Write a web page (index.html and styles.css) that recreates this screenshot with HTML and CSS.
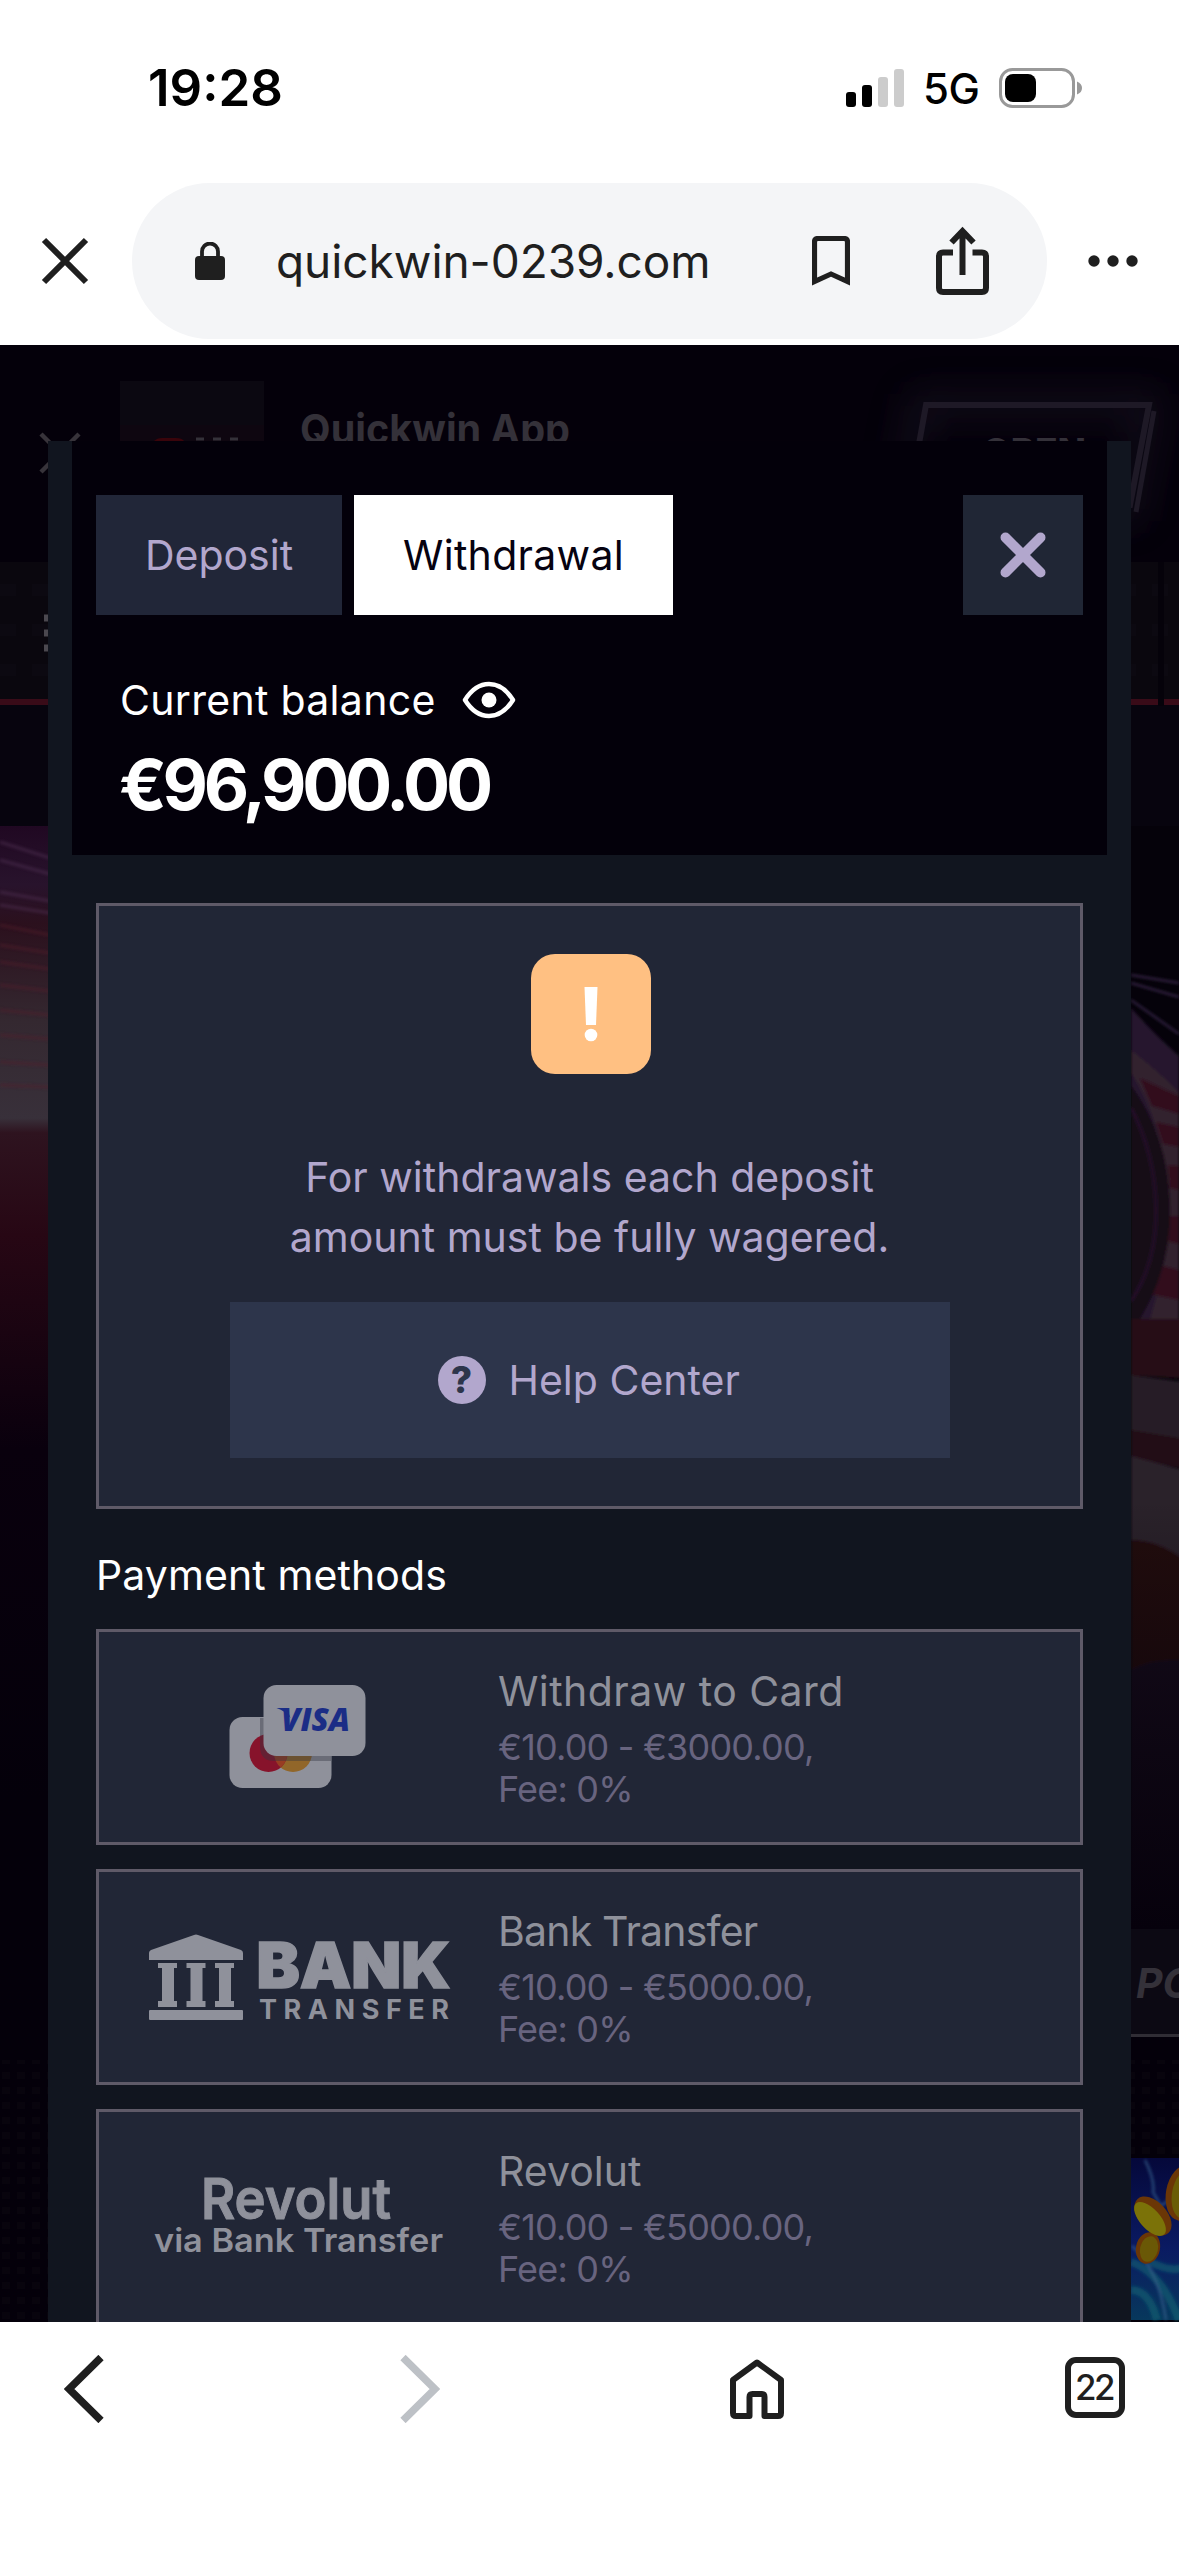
FILE: index.html
```html
<!DOCTYPE html>
<html lang="en">
<head>
<meta charset="utf-8">
<title>Quickwin – Withdrawal</title>
<link rel="stylesheet" href="styles.css">
</head>
<body>
<header class="browser-top">
  <div class="status">
    <span class="time">19:28</span>
    <div class="status-right">
      <svg class="signal" width="58" height="38" viewBox="0 0 58 38"><rect y="23" width="10" height="15" rx="3"/><rect x="16" y="16" width="10" height="22" rx="3"/><rect x="32" y="8" width="10" height="30" rx="3" fill="#ccc"/><rect x="48" width="10" height="38" rx="3" fill="#ccc"/></svg>
      <span class="network">5G</span>
      <svg class="battery" width="83" height="40" viewBox="0 0 83 40"><rect x="1.5" y="1.5" width="73" height="37" rx="12" fill="none" stroke="#999" stroke-width="3"/><rect x="6" y="6" width="31" height="28" rx="8"/><path d="M78 13.5q5 2 5 6.500t-5 6.500z" fill="#999"/></svg>
    </div>
  </div>
  <div class="toolbar">
    <svg class="tb-close" width="48" height="48" viewBox="0 0 48 48"><path d="M3 3l42 42M45 3L3 45" stroke="#1f1f1f" stroke-width="6" fill="none"/></svg>
    <div class="address">
      <svg class="lock" width="30" height="38" viewBox="0 0 30 38"><path d="M7 17V9.500a8 8 0 0 1 16 0V17" fill="none" stroke="#1f1f1f" stroke-width="3.800"/><rect y="14" width="30" height="24" rx="4" fill="#1f1f1f"/></svg>
      <span class="url">quickwin-0239.com</span>
      <svg class="bookmark" width="38" height="50" viewBox="0 0 38 50"><path d="M2.500 45.500V6q0-3.500 3.500-3.500h26q3.500 0 3.500 3.500v39.500L19 38z" fill="none" stroke="#1f1f1f" stroke-width="5.200"/></svg>
      <svg class="share" width="54" height="70" viewBox="0 0 54 70"><g fill="none" stroke="#1f1f1f" stroke-width="6"><path d="M17 26.500H7q-4 0-4 4V62q0 4 4 4h39q4 0 4-4V30.500q0-4-4-4H36.500"/><path d="M26.500 49V5M15.500 16.500L26.500 5l11 11.500"/></g></svg>
    </div>
    <svg class="more" width="50" height="12" viewBox="0 0 50 12"><circle cx="6" cy="6" r="5.700"/><circle cx="25" cy="6" r="5.700"/><circle cx="44" cy="6" r="5.700"/></svg>
  </div>
</header>

<main class="page">
  <svg class="backdrop" width="1179" height="1980" viewBox="0 345 1179 1980">
    <defs>
      <linearGradient id="left" x1="0" y1="0" x2="0" y2="1"><stop offset="0" stop-color="#200822"/><stop offset=".06" stop-color="#28132c"/><stop offset=".1" stop-color="#2b101d"/><stop offset=".2" stop-color="#342830"/><stop offset=".3" stop-color="#38303a"/><stop offset=".315" stop-color="#2e131f"/><stop offset=".42" stop-color="#270714"/><stop offset=".52" stop-color="#1a0411"/><stop offset=".64" stop-color="#09000d"/><stop offset="1" stop-color="#04000a"/></linearGradient>
      <linearGradient id="fade" x1="0" y1="0" x2="0" y2="1"><stop offset="0" stop-color="#07010a" stop-opacity="0"/><stop offset="1" stop-color="#06010c"/></linearGradient>
      <linearGradient id="sky" x1="0" y1="0" x2="0" y2="1"><stop offset="0" stop-color="#05083a"/><stop offset=".55" stop-color="#0a1a62"/><stop offset="1" stop-color="#07385c"/></linearGradient>
      <pattern id="dots" width="15" height="15" patternUnits="userSpaceOnUse"><rect x="2" y="2" width="8" height="7" fill="#08040d"/></pattern>
      <filter id="glow" x="-30%" y="-60%" width="160%" height="220%"><feGaussianBlur stdDeviation="18"/></filter>
      <filter id="soft"><feGaussianBlur stdDeviation="1.500"/></filter>
    </defs>
    <rect y="345" width="1179" height="1980" fill="#04000a"/>
    <rect x="120" y="381" width="144" height="80" fill="#0b0811"/>
    <rect x="120" y="425" width="144" height="36" fill="#0e0610"/>
    <path d="M154 441q3-3 8-3h14q6 0 8 3z" fill="#3a040b"/>
    <path d="M196 439h8M213 439h8M230 439h8" stroke="#343139" stroke-width="3"/>
    <path d="M41 434l37 37M79 434L41 472" stroke="#37333a" stroke-width="4.500"/>
    <path d="M920 405h230l-20 105H900z" fill="none" stroke="#262030" stroke-width="22" filter="url(#glow)" opacity=".45"/>
    <path d="M917 455l9-50h223l-19 100h-24" fill="none" stroke="#1e1926" stroke-width="6"/>
    <path d="M1154 411l-18 101" stroke="#1e1926" stroke-width="5"/>
    <rect y="562" width="1179" height="144" fill="#0a070e"/>
    <g stroke="#0c0911" stroke-width="12" stroke-dasharray="16 16"><path d="M0 590H1179M0 630H1179M0 670H1179"/></g>
    <rect y="699" width="1179" height="6" fill="#390b18"/>
    <rect y="705" width="1179" height="121" fill="#07040e"/>
    <rect x="1158" y="562" width="6" height="144" fill="#05020a"/>
    <path d="M44 618h10M44 633h10M44 648h10" stroke="#4b484f" stroke-width="7"/>
    <rect y="826" width="60" height="974" fill="url(#left)"/>
    <g stroke-width="3" opacity=".5" fill="none" filter="url(#soft)"><path d="M0 842l50 16M0 860l50 14M0 892l50 9M0 905l50 8" stroke="#513154"/><path d="M0 925l50 10M0 945l50 8M0 962l50 7M0 985l50 6M0 1010l50 5M0 1035l50 4M0 1062l50 3M0 1085l50 2" stroke="#521d2c"/></g>
    <rect x="1120" y="826" width="59" height="1104" fill="#05020a"/>
    <g filter="url(#soft)">
      <path d="M1131 975l48 8M1131 983l48 14M1131 1000l48 34" stroke="#362547" stroke-width="2" fill="none"/>
      <path d="M1131 1008q25 28 48 48v270l-48-6z" fill="#28152f"/>
      <path d="M1131 1050q30 24 48 42v236h-32q30-90 18-160-10-60-34-95z" fill="#30202e"/>
      <path d="M1140 1078l39 18v18l-27-8zM1156 1122l23 5v20l-16-3zM1168 1165l11 1v24l-9-2zM1169 1216h10v28l-12-3zM1160 1265l19 5v30l-29-6z" fill="#32101e"/>
      <path d="M1131 1085q37 50 39 120t-39 128z" fill="#150817"/>
      <path d="M1131 1108q24 45 25 100t-25 93" fill="none" stroke="#211026" stroke-width="4"/>
      <path d="M1131 1319h60v60l-60-4z" fill="#260812"/>
      <path d="M1131 1375l60 8v65l-60-14z" fill="#281b26"/>
      <path d="M1131 1430l60 10v30l-60-12z" fill="#230b15"/>
      <path d="M1131 1456l60 16v90l-60-20z" fill="#2a202a"/>
      <path d="M1131 1540q30 0 60 25v130h-60z" fill="#22070f"/>
      <path d="M1131 1670q20-12 60-10v270h-60z" fill="#170e1a"/>
    </g>
    <rect x="1120" y="1500" width="59" height="430" fill="url(#fade)"/>
    <rect x="1120" y="1929" width="59" height="106" fill="#0c0913"/>
    <rect x="1120" y="2034" width="59" height="3" fill="#302d35"/>
    <rect y="2060" width="48" height="265" fill="url(#dots)"/>
    <rect x="1131" y="2060" width="48" height="98" fill="url(#dots)"/>
    <path d="M1120 2158h59v162h-48z" fill="url(#sky)"/>
    <g filter="url(#soft)" fill="none">
      <path d="M1131 2262q30 10 48 58M1131 2290q18 0 26 30M1150 2262q20 10 32 6" stroke="#0d6373" stroke-width="8" opacity=".6"/>
      <path d="M1132 2246q26 22 34 74M1145 2160q10 20 8 32l8 14 8-6" stroke="#35608c" stroke-width="2.500" opacity=".7"/>
    </g>
    <g fill="#6b3606"><ellipse cx="1153" cy="2216" rx="14" ry="23" transform="rotate(-42 1153 2216)"/><ellipse cx="1148" cy="2248" rx="12" ry="16" transform="rotate(12 1148 2248)"/><ellipse cx="1183" cy="2193" rx="17" ry="28" transform="rotate(10 1183 2193)"/></g>
    <g fill="#7b7208"><ellipse cx="1150" cy="2219" rx="10" ry="21" transform="rotate(-42 1150 2219)"/><ellipse cx="1149" cy="2249" rx="9" ry="13" transform="rotate(12 1149 2249)" fill="#6a5806"/><ellipse cx="1186" cy="2194" rx="14" ry="25" transform="rotate(10 1186 2194)" fill="#6a5c06"/></g>
    <g font-family="Inter, sans-serif" fill="#343139">
      <text x="300" y="444" font-size="41" font-weight="700" textLength="270" lengthAdjust="spacingAndGlyphs">Quickwin App</text>
      <text x="982" y="466" font-size="38" font-weight="800" textLength="104" lengthAdjust="spacingAndGlyphs">OPEN</text>
      <text x="1136" y="1998" font-size="41" font-weight="700" font-style="italic">PO</text>
    </g>
  </svg>

  <section class="modal">
    <div class="modal-head">
      <nav class="tabs">
        <button class="tab">Deposit</button>
        <button class="tab tab-on">Withdrawal</button>
        <button class="close" aria-label="Close"><svg width="48" height="48" viewBox="0 0 48 48"><path d="M6.500 6.500l35 35M41.500 6.500l-35 35" stroke="#b2a7cd" stroke-width="10" stroke-linecap="round"/></svg></button>
      </nav>
      <div class="balance">
        <div class="balance-label"><span>Current balance</span>
          <svg width="54" height="38" viewBox="0 0 54 38"><path d="M3 19Q13 3 27 3t24 16Q41 35 27 35T3 19z" fill="none" stroke="#fff" stroke-width="4.500" stroke-linejoin="round"/><circle cx="27" cy="19" r="7.500" fill="#fff"/></svg>
        </div>
        <div class="amount">€96,900.00</div>
      </div>
    </div>

    <div class="notice">
      <div class="warn"><svg width="14" height="56" viewBox="0 0 14 56"><path d="M0.500 1h13l-1.500 38H2z" fill="#fff"/><circle cx="7" cy="49" r="6.300" fill="#fff"/></svg></div>
      <p class="notice-text">For withdrawals each deposit<br>amount must be fully wagered.</p>
      <button class="help">
        <span class="question">?</span>
        <span>Help Center</span>
      </button>
    </div>

    <h2 class="heading">Payment methods</h2>

    <div class="methods">
      <article class="method">
        <div class="logo">
          <svg width="300" height="110" viewBox="148 1682 300 110">
            <rect x="229.500" y="1717" width="102" height="71" rx="13" fill="#8f919b"/>
            <circle cx="293" cy="1753" r="19" fill="#916629"/><circle cx="268.500" cy="1753" r="19" fill="#87132b"/>
            <path d="M280.700 1738.500a19 19 0 0 1 0 29 19 19 0 0 1 0-29z" fill="#983d22"/>
            <path d="M260 1718v28q0 15 14 15h57v-8h-60v-35z" fill="#333540" opacity=".4"/>
            <rect x="263.500" y="1685" width="102" height="71" rx="13" fill="#8f919b"/>
            <text x="281" y="1731" font-family="Open Sans, sans-serif" font-size="31.500" font-weight="800" font-style="italic" fill="#1b2d86" textLength="69" lengthAdjust="spacingAndGlyphs">VISA</text>
            <path d="M276.500 1708h10l4 10q-5-7-14-10z" fill="#1b2d86"/>
          </svg>
        </div>
        <div class="info"><h3 class="name-card">Withdraw to Card</h3><p>€10.00 - €3000.00,<br>Fee: 0%</p></div>
      </article>
      <article class="method">
        <div class="logo">
          <svg width="304" height="110" viewBox="147 1922 304 110" fill="#8f919b">
            <path d="M148 1953q0-2 2-3l43-15q2-1 4 0l43 15q2 1 2 3v7h-94z"/>
            <path id="col" d="M157 1963h19v5h-3v33h3v6h-19v-6h4v-33h-4z"/><use href="#col" x="28.500"/><use href="#col" x="57"/>
            <rect x="148" y="2010" width="94" height="10" rx="1"/>
            <text x="255.500" y="1988" font-family="Inter, sans-serif" font-size="63" font-weight="900" stroke="#8f919b" stroke-width="1.500" textLength="194" lengthAdjust="spacingAndGlyphs">BANK</text>
            <text x="258" y="2018.500" font-family="Inter, sans-serif" font-size="27" font-weight="700" textLength="190">TRANSFER</text>
          </svg>
        </div>
        <div class="info"><h3 class="name-bank">Bank Transfer</h3><p>€10.00 - €5000.00,<br>Fee: 0%</p></div>
      </article>
      <article class="method">
        <div class="logo">
          <svg width="300" height="110" viewBox="148 2162 300 110" fill="#8f919b" font-family="Inter, sans-serif">
            <text x="201" y="2218.500" font-size="57" font-weight="600" stroke="#8f919b" textLength="190" lengthAdjust="spacingAndGlyphs">Revolut</text>
            <text x="154" y="2252" font-size="33" font-weight="600" textLength="289" lengthAdjust="spacingAndGlyphs">via Bank Transfer</text>
          </svg>
        </div>
        <div class="info"><h3>Revolut</h3><p>€10.00 - €5000.00,<br>Fee: 0%</p></div>
      </article>
    </div>
  </section>
</main>

<footer class="browser-bottom">
  <svg width="40" height="68" viewBox="0 0 40 68"><path d="M37 2.500L5 34l32 31.500" fill="none" stroke="#1f1f1f" stroke-width="7.500"/></svg>
  <svg class="forward" width="40" height="68" viewBox="0 0 40 68"><path d="M3 2.500L35 34 3 65.500" fill="none" stroke="#bdc1c6" stroke-width="7.500"/></svg>
  <svg class="home" width="54" height="60" viewBox="0 0 54 60"><path d="M3 21L27 3.500 51 21v33q0 3-3 3H34.500V38q0-3-3-3h-9q-3 0-3 3v19H6q-3 0-3-3z" fill="none" stroke="#1f1f1f" stroke-width="6" stroke-linejoin="round"/></svg>
  <div class="tabcount">22</div>
</footer>
</body>
</html>
```

FILE: styles.css
```css
* { box-sizing: border-box; }
body { margin: 0; width: 1179px; height: 2556px; display: flex; flex-direction: column; overflow: hidden; background: #fff; font-family: Inter, "Liberation Sans", sans-serif; }
svg { display: block; flex: none; }
button { border: 0; margin: 0; padding: 0; font: inherit; letter-spacing: inherit; }
span { white-space: nowrap; }
h2, h3, p { margin: 0; font-weight: 400; }

.browser-top { height: 345px; flex: none; background: #fff; display: flex; flex-direction: column; }
.status { height: 183px; padding: 8px 97px 16px 148px; display: flex; align-items: center; justify-content: space-between; }
.time { font-size: 51px; font-weight: 600; line-height: 60px; }
.status-right { display: flex; align-items: center; }
.network { width: 95px; padding: 3px 0 0 19px; font-size: 42px; font-weight: 500; line-height: 50px; letter-spacing: -0.5px; }
.toolbar { height: 156px; display: flex; align-items: center; }
.tb-close { margin: 0 43px 0 41px; }
.address { width: 915px; height: 156px; border-radius: 78px; background: #f4f5f7; display: flex; align-items: center; }
.lock { margin-left: 63px; }
.url { width: 535px; margin-left: 51px; font-size: 46px; line-height: 60px; letter-spacing: -0.05px; color: #1f1f1f; }
.bookmark { margin-left: 1px; }
.share { margin-left: 86px; }
.more { margin-left: 41px; fill: #1f1f1f; }

.page { height: 1977px; flex: none; position: relative; overflow: hidden; background: #04000a; padding: 96px 48px 0; }
.backdrop { position: absolute; left: 0; top: 0; }
.modal { position: relative; height: 1884px; background: #11151f; padding: 0 24px; }
.modal-head { height: 414px; background: #03000a; padding: 54px 24px 0; }
.tabs { display: flex; gap: 12px; height: 120px; font-size: 41px; }
.tab { width: 246px; background: #212638; color: #b2a7cd; }
.tab-on { width: 319px; background: #fff; color: #060210; letter-spacing: 0.3px; }
.close { width: 120px; margin-left: auto; background: #202635; display: flex; align-items: center; justify-content: center; }
.balance { padding: 57px 24px 0; color: #fff; }
.balance-label { display: flex; align-items: center; gap: 28px; height: 56px; font-size: 41px; letter-spacing: 0.3px; }
.balance-label span { width: 314px; }
.amount { font-size: 70px; line-height: 84px; font-weight: 700; letter-spacing: -4.3px; margin: 15px 0 0 -1px; }

.notice { margin: 48px 24px 0; height: 606px; border: 3px solid #5f5a68; background: #212636; padding-top: 48px; display: flex; flex-direction: column; align-items: center; }
.warn { width: 120px; height: 120px; border-radius: 24px; background: #ffc082; display: flex; align-items: center; justify-content: center; margin-left: 3px; }
.notice-text { margin-top: 73px; text-align: center; font-size: 41px; line-height: 60px; color: #b2a7cd; }
.help { width: 720px; height: 156px; margin-top: 35px; background: #2d354b; color: #b2a7cd; font-size: 41px; display: flex; align-items: center; padding-left: 208px; gap: 23px; }
.question { width: 48px; height: 48px; border-radius: 50%; background: #b2a7cd; color: #2d354b; font-size: 37px; line-height: 48px; font-weight: 800; text-align: center; }

.heading { margin: 42px 24px 0; height: 78px; font-size: 41px; line-height: 48px; letter-spacing: 0.1px; color: #fff; }
.methods { margin: 0 24px; display: flex; flex-direction: column; gap: 24px; }
.method { height: 216px; flex: none; border: 3px solid #5f5a68; background: #212636; display: flex; align-items: center; }
.logo { width: 399px; padding-left: 49px; }
.info h3 { font-size: 41px; line-height: 48px; color: #8f919b; margin-top: 2px; }
.info .name-card { letter-spacing: 0.45px; }
.info .name-bank { letter-spacing: -0.8px; }
.info p { font-size: 36px; line-height: 42px; letter-spacing: -0.8px; color: #68647f; margin-top: 11px; }

.browser-bottom { height: 234px; flex: none; background: #fff; padding: 33px 54px 0 64px; display: flex; align-items: flex-start; }
.forward { margin-left: 296px; }
.home { margin: 4px 0 0 290px; }
.tabcount { width: 60px; height: 61px; margin: 2px 0 0 auto; border: 6px solid #1f1f1f; border-radius: 11px; font-size: 35px; line-height: 49px; font-weight: 500; text-align: center; letter-spacing: -2.5px; text-indent: -2px; color: #1f1f1f; }
```
